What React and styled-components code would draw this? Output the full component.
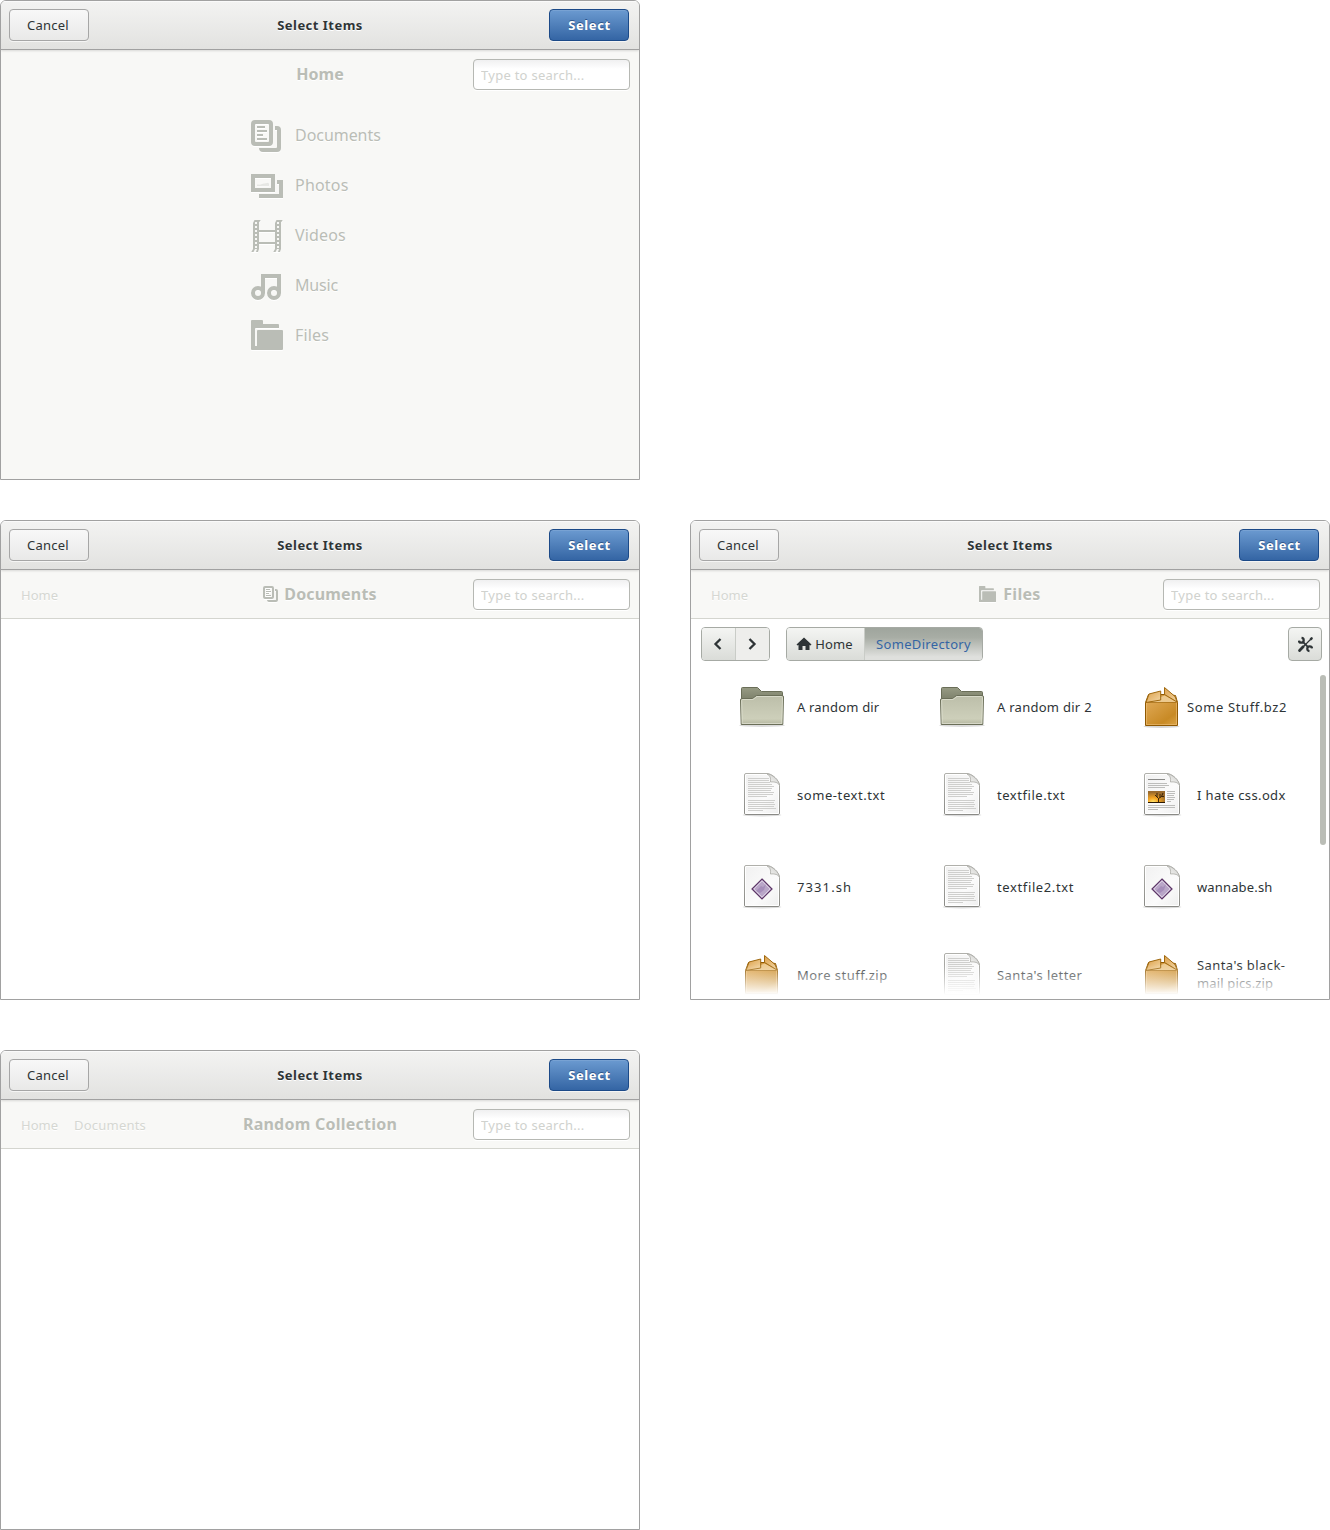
import React from "react";
import styled, { createGlobalStyle, css } from "styled-components";

const Global = createGlobalStyle`
  * { box-sizing: border-box; }
  body { margin: 0; background: #fff; font-family: "Noto Sans", "Open Sans", sans-serif; font-size: 13px; color: #2e3436; }
  button, input { font: inherit; color: inherit; }
`;

const Board = styled.main`
  width: 1330px;
  height: 1530px;
  display: grid;
  grid-template-columns: 640px 640px;
  grid-template-rows: 520px 530px 480px;
  column-gap: 50px;
  align-content: start;
  overflow: hidden;
`;

const Dialog = styled.section`
  grid-column: ${(p) => p.$col};
  grid-row: ${(p) => p.$row};
  height: 480px;
  display: flex;
  flex-direction: column;
  border: 1px solid #a1a1a1;
  border-radius: 6px 6px 0 0;
  background: ${(p) => (p.$tinted ? "#f8f8f6" : "#fff")};
  overflow: hidden;
`;

const Header = styled.header`
  flex: none;
  height: 49px;
  display: grid;
  grid-template-columns: 1fr auto 1fr;
  align-items: center;
  padding: 0 8px;
  border-bottom: 1px solid #a1a1a1;
  background: linear-gradient(#f3f3f2, #e2e2e0);
  box-shadow: inset 0 1px #fafafa, 0 1px 2px rgba(0, 0, 0, 0.12);
  position: relative;
`;

const Heading = styled.h1`
  margin: 0;
  font-size: 13px;
  font-weight: 700;
  line-height: 18px;
  letter-spacing: 0.48px;
  text-shadow: 0 1px #fff;
`;

const PushButton = styled.button`
  width: 80px;
  height: 32px;
  padding: 0 2px 0 0;
  border: 1px solid #a6a6a6;
  border-radius: 4px;
  background: linear-gradient(#f8f8f8, #e9e9e8);
  box-shadow: 0 1px rgba(255, 255, 255, 0.6);
  letter-spacing: 0.25px;
  ${(p) =>
    p.$primary &&
    css`
      justify-self: end;
      margin-right: 2px;
      padding: 0 0 0 1px;
      border-color: #1c4a88;
      background: linear-gradient(#6b9ad0, #3465a4);
      box-shadow: inset 0 1px #78a2d3, 0 1px rgba(255, 255, 255, 0.6);
      color: #fff;
      font-weight: 700;
      letter-spacing: 0.6px;
      text-shadow: 0 -1px rgba(20, 50, 100, 0.6);
    `}
`;

const SubBar = styled.div`
  flex: none;
  height: 49px;
  display: grid;
  grid-template-columns: minmax(0, 1fr) auto minmax(0, 1fr);
  align-items: center;
  padding: 0 9px;
  background: #f8f8f6;
  border-bottom: 1px solid ${(p) => (p.$plain ? "transparent" : "#d4d5cf")};
`;

const Crumbs = styled.nav`
  display: flex;
  gap: 16px;
  padding: 2px 0 0 11px;
  color: #d5d7d2;
  text-shadow: 0 1px #fff;
`;

const Crumb = styled.span`
  letter-spacing: ${(p) => p.$track || 0}px;
`;

const Place = styled.h2`
  margin: 0;
  display: flex;
  align-items: center;
  gap: ${(p) => p.$gap || 0}px;
  color: #babdb6;
  font-size: 16px;
  line-height: 22px;
  font-weight: 700;
  text-shadow: 0 1px #fff;
  letter-spacing: ${(p) => p.$track || 0}px;
  svg { filter: drop-shadow(0 1px #fff); }
`;

const Search = styled.input`
  justify-self: end;
  width: 157px;
  height: 31px;
  margin-top: 1px;
  padding: 1px 7px;
  border: 1px solid #b6b8b3;
  border-radius: 4px;
  background: linear-gradient(#f0f0f1, #fff 9px);
  box-shadow: 0 1px #fff;
  outline: none;
  &::placeholder { color: #d0d2ce; opacity: 1; letter-spacing: 0.27px; }
`;

const PlaceList = styled.ul`
  list-style: none;
  margin: 0;
  padding: 12px 0 0 250px;
`;

const PlaceItem = styled.li`
  height: 50px;
  display: flex;
  align-items: center;
  gap: 12px;
  color: #babdb6;
  font-size: 16px;
  line-height: 22px;
  text-shadow: 0 1px #fff;
  letter-spacing: ${(p) => p.$track || 0}px;
  svg { filter: drop-shadow(0 1px #fff); }
`;

const PlaceName = styled.span`
  padding-bottom: 2px;
`;

const Browser = styled.div`
  flex: 1;
  min-height: 0;
  position: relative;
  display: flex;
  flex-direction: column;
`;

const Toolbar = styled.div`
  flex: none;
  height: 44px;
  display: flex;
  align-items: flex-start;
  padding: 8px 7px 0 10px;
`;

const ButtonGroup = styled.div`
  display: flex;
  height: 34px;
  margin-right: 16px;
  border: 1px solid #a6aaa4;
  border-radius: 4px;
  overflow: hidden;
`;

const Segment = styled.button`
  width: ${(p) => p.$w}px;
  display: flex;
  align-items: center;
  justify-content: center;
  gap: 3px;
  padding: 0 2px 0 0;
  border: 0;
  letter-spacing: ${(p) => p.$track || 0}px;
  background: ${(p) => (p.$flat ? "#eeeeec" : "linear-gradient(#f4f5f3, #dadcd8)")};
  ${(p) => p.$divided && css`border-right: 1px solid #c9ccc7;`}
  ${(p) =>
    p.$active &&
    css`
      padding: 0;
      color: #3465a4;
      background: linear-gradient(#9fa59d, #a8ada5 30%, #dfe0dd 90%);
    `}
`;

const ToolButton = styled.button`
  width: 34px;
  height: 34px;
  margin-left: auto;
  padding: 0;
  display: flex;
  align-items: center;
  justify-content: center;
  border: 1px solid #a6aaa4;
  border-radius: 4px;
  background: linear-gradient(#f4f5f3, #dadcd8);
`;

const FileGrid = styled.div`
  flex: 1;
  min-height: 0;
  overflow: hidden;
  display: grid;
  grid-template-columns: repeat(3, 200px);
  grid-template-rows: 88px 88px 96px 80px;
  padding-left: 47px;
`;

const FileItem = styled.div`
  display: flex;
  align-items: center;
  gap: ${(p) => p.$gap ?? 11}px;
`;

const FileName = styled.div`
  line-height: 18px;
  padding-bottom: ${(p) => (p.$multi ? 3 : 0)}px;
`;

const FileLine = styled.div`
  white-space: nowrap;
  letter-spacing: ${(p) => p.$track || 0}px;
`;

const Fade = styled.div`
  position: absolute;
  left: 0;
  right: 10px;
  bottom: 0;
  height: 35px;
  background: linear-gradient(rgba(255, 255, 255, 0), #fff 31px);
`;

const ScrollThumb = styled.div`
  position: absolute;
  top: 56px;
  right: 3px;
  width: 6px;
  height: 170px;
  border-radius: 3px;
  background: #babdb6;
`;

const DocumentsIcon = ({ size = 32 }) => (
  <svg width={size} height={size} viewBox="0 0 32 32" fill="#babdb6">
    <path fillRule="evenodd" d="M4 0h14a4 4 0 0 1 4 4v18a4 4 0 0 1-4 4H4a4 4 0 0 1-4-4V4a4 4 0 0 1 4-4zM5 4a1 1 0 0 0-1 1v16a1 1 0 0 0 1 1h12a1 1 0 0 0 1-1V5a1 1 0 0 0-1-1z" />
    <path d="M6 6h8v2H6zM6 10h10v2H6zM6 14h6v2H6zM6 18h10v2H6z" />
    <path d="M24 6h2a4 4 0 0 1 4 4v18a4 4 0 0 1-4 4H12a4 4 0 0 1-4-4h17a1 1 0 0 0 1-1V10h-2z" />
  </svg>
);

const PhotosIcon = () => (
  <svg width="32" height="32" viewBox="0 0 32 32" fill="#babdb6">
    <path fillRule="evenodd" d="M0 4h24v18H0zM4 8v10h16V8z" />
    <path d="M26 10h6v18H8v-4h20V14h-2z" />
    <path opacity=".3" d="M6 16v-1.500l3 .3 3-1 3-.6 2-.4 1 1V16z" />
  </svg>
);

const strip = (x) => (
  <g key={x}>
    <path d={`M${x + 2.5} 0H${x + 8.7}L${x + 7} 2.500V29L${x + 6} 32H${x - 0.7}L${x + 1} 29V3z`} />
    {[2, 6, 10, 14, 18, 22, 26].map((y) => (
      <rect key={y} x={x + 3} y={y} width="2" height="2" fill="#f8f8f6" />
    ))}
    <path d={`M${x + 1.5} 32l1.500-3h2l-1 3z`} fill="#f8f8f6" />
  </g>
);

const VideosIcon = () => (
  <svg width="32" height="32" viewBox="0 0 32 32" fill="#babdb6">
    <path d="M7 10h18v2H7zM7 22h18v2H7z" />
    {strip(1)}
    {strip(23)}
  </svg>
);

const MusicIcon = () => (
  <svg width="32" height="32" viewBox="0 0 32 32" fill="#babdb6">
    <path d="M10 4h20v19h-4V8H14v15h-4z" />
    <g fill="none" stroke="#babdb6" strokeWidth="4">
      <circle cx="7" cy="23" r="5" />
      <circle cx="23" cy="23" r="5" />
    </g>
  </svg>
);

const FilesIcon = ({ size = 32 }) => (
  <svg width={size} height={size} viewBox="0 0 32 32" fill="#babdb6">
    <path d="M1 0h10a1 1 0 0 1 1 1v3h15a1 1 0 0 1 1 1v3H5a1 1 0 0 0-1 1v17h2v4H1a1 1 0 0 1-1-1V1a1 1 0 0 1 1-1z" />
    <path d="M7 10h24a1 1 0 0 1 1 1v18a1 1 0 0 1-1 1H4v-3h2V11a1 1 0 0 1 1-1z" />
  </svg>
);

const Chevron = ({ d }) => (
  <svg width="16" height="16" viewBox="0 0 16 16" fill="none" stroke="#2e3436" strokeWidth="2.3">
    <path d={d} />
  </svg>
);

const HouseIcon = () => (
  <svg width="16" height="16" viewBox="0 0 16 16" fill="#2e3436">
    <path d="M8 1.500 15.500 8.500 14.500 9.500 13.500 9V14H9.500V10H6.500V14H2.500V9L1.500 9.500.5 8.500z" />
  </svg>
);

const ToolsIcon = () => (
  <svg width="17" height="17" viewBox="0 0 18 18" fill="none" stroke="#2e3436">
    <path strokeWidth="1.300" d="M7 11 14 4" />
    <path strokeWidth="3" strokeLinecap="round" d="M2.700 15.300 6.500 11.500" />
    <path strokeWidth="2.600" strokeLinecap="round" d="M14.700 3.300 15.500 2.500" />
    <path strokeWidth="2" d="M6 6 12 12" />
    <path strokeWidth="2.400" d="M4.800 2.100A2.500 2.500 0 1 1 2.100 4.800M13.200 15.900A2.500 2.500 0 1 1 15.900 13.200" />
  </svg>
);

const FolderIcon = () => (
  <svg width="48" height="48" viewBox="0 0 48 48">
    <defs>
      <linearGradient id="folderFront" x1="0" y1="0" x2="0" y2="1">
        <stop offset="0" stopColor="#bcbea9" />
        <stop offset=".8" stopColor="#cdcfba" />
        <stop offset="1" stopColor="#b4b69f" />
      </linearGradient>
      <linearGradient id="folderBack" x1="0" y1="0" x2="0" y2="1">
        <stop offset="0" stopColor="#979b84" />
        <stop offset=".35" stopColor="#7d816b" />
      </linearGradient>
    </defs>
    <ellipse cx="24" cy="42.500" rx="23" ry="1.500" fill="#000" opacity=".14" />
    <path d="M3.500 38V5.500a1 1 0 0 1 1-1H19.500L23.500 8.500H43.500a1 1 0 0 1 1 1V38z" fill="url(#folderBack)" stroke="#6a6e58" />
    <path d="M2.500 17a1.500 1.500 0 0 1 1.500-1.500H14.500L18.500 12.500H44a1.500 1.500 0 0 1 1.500 1.500L44.800 41.500H3.200z" fill="url(#folderFront)" stroke="#6a6e58" />
    <path d="M3.700 17.500a1 1 0 0 1 1-1H15L19 13.500H43.500a1 1 0 0 1 1 1L43.800 40.500H4.200z" fill="none" stroke="#e3e4d6" strokeOpacity=".7" />
  </svg>
);

const Sheet = ({ children }) => (
  <svg width="48" height="48" viewBox="0 0 48 48">
    <defs>
      <linearGradient id="sheetFill" x1="0" y1="0" x2="1" y2="1">
        <stop offset="0" stopColor="#f1f1f1" />
        <stop offset=".6" stopColor="#fbfbfb" />
        <stop offset="1" stopColor="#eeeeee" />
      </linearGradient>
      <linearGradient id="sheetEdge" x1="0" y1="0" x2="0" y2="1">
        <stop offset="0" stopColor="#b0b0ab" />
        <stop offset="1" stopColor="#8a8a86" />
      </linearGradient>
      <linearGradient id="sheetFold" x1="0" y1="1" x2="1" y2="0">
        <stop offset="0" stopColor="#ffffff" />
        <stop offset="1" stopColor="#c9c9c5" />
      </linearGradient>
    </defs>
    <ellipse cx="24" cy="44" rx="19.500" ry="1.500" fill="#000" opacity=".14" />
    <path d="M8 2.500H29c5 0 12.500 7 12.500 12V42a1.500 1.500 0 0 1-1.500 1.500H8A1.500 1.500 0 0 1 6.500 42V4A1.500 1.500 0 0 1 8 2.500z" fill="url(#sheetFill)" stroke="url(#sheetEdge)" />
    <path d="M8 3.500H29c5 0 11.500 6 11.500 11V42.500H7.500V4z" fill="none" stroke="#fff" />
    {children}
    <path d="M29 3c3 1 4 4 3.500 8 4-.5 8 .5 9 3.500C41 9 34 3 29 3z" fill="url(#sheetFold)" stroke="#a9a9a5" strokeWidth=".8" />
  </svg>
);

const textLines = [
  [7, 21], [9, 21], [11, 22], [13, 24], [15, 26], [17, 24], [19, 23], [21, 26], [23, 25], [25, 19],
  [29, 27], [31, 26], [33, 27], [35, 26], [37, 28], [39, 15],
];

const TextIcon = () => (
  <Sheet>
    {textLines.map(([y, w]) => (
      <rect key={y} x="10" y={y} width={w} height="1" fill="#cfcfcd" />
    ))}
  </Sheet>
);

const ScriptIcon = () => (
  <Sheet>
    <path d="M24 16 34 26 24 36 14 26z" fill="#b9a6c8" stroke="#5c3566" strokeWidth="1.200" />
    <path d="M24 17.800 32.200 26 24 34.200 15.800 26z" fill="none" stroke="#e6dcec" strokeWidth=".9" />
    <path d="M18 28 23 23 25 24 28 21 26 27 22 30z" fill="#9a7fb0" opacity=".6" />
  </Sheet>
);

const OfficeIcon = () => (
  <Sheet>
    <rect x="10" y="8" width="17" height="1" fill="#8a8a88" />
    {[[10, 12, 19], [10, 14, 21], [10, 16, 17], [29, 20, 8], [29, 22, 8], [29, 24, 7], [29, 26, 8], [29, 28, 7], [29, 30, 4], [10, 34, 27], [10, 36, 27], [10, 38, 10]].map(([x, y, w]) => (
      <rect key={`${x}-${y}`} x={x} y={y} width={w} height="1" fill="#bdbdbb" />
    ))}
    <defs>
      <radialGradient id="sunset" cx=".3" cy=".9" r=".8">
        <stop offset="0" stopColor="#ffe36a" />
        <stop offset=".4" stopColor="#f5a623" />
        <stop offset="1" stopColor="#9a6a2c" />
      </radialGradient>
    </defs>
    <rect x="10" y="20" width="17" height="12" fill="url(#sunset)" />
    <rect x="10" y="31" width="17" height="1" fill="#2b1a06" />
    <path d="M20.500 31V27.500L17 24M20.500 27.500 23.500 25.500 25 22M19 26V22M22 26.500V23M23.500 25.500H26" fill="none" stroke="#2b1a06" strokeWidth=".9" />
  </Sheet>
);

const PackageIcon = () => (
  <svg width="48" height="48" viewBox="0 0 48 48">
    <defs>
      <linearGradient id="boxFront" x1="0" y1="0" x2="1" y2="1">
        <stop offset="0" stopColor="#dfa855" />
        <stop offset=".7" stopColor="#c88a25" />
        <stop offset="1" stopColor="#dba548" />
      </linearGradient>
      <linearGradient id="boxFlap" x1="0" y1="0" x2="1" y2="1">
        <stop offset="0" stopColor="#dca04a" />
        <stop offset="1" stopColor="#f3d7a6" />
      </linearGradient>
    </defs>
    <ellipse cx="23.500" cy="43.500" rx="18" ry="1.500" fill="#000" opacity=".16" />
    <path d="M7.500 19.500 10.500 11.500 22.500 11.500H27L37.500 12.500 39.500 19.500z" fill="#d39b45" stroke="#8f5902" />
    <path d="M13 19 22.500 14 27 12.500 38 19z" fill="#ecc98e" />
    <path d="M7.500 19.500H39.500V42.500H7.500z" fill="url(#boxFront)" />
    <path d="M7.500 19.500V42.500H39.500V19.500" fill="none" stroke="#8f5902" />
    <path d="M8.500 19.500V41.500H38.500V19.500" fill="none" stroke="#eec07a" strokeOpacity=".6" />
    <path d="M11 11 22.700 8V17L8 19.500z" fill="url(#boxFlap)" stroke="#a0690f" />
    <path d="M26.500 4.500 37 13.500 39.200 19 26.500 11.500z" fill="url(#boxFlap)" stroke="#a0690f" />
  </svg>
);

const places = [
  { name: "Documents", Icon: DocumentsIcon, track: -0.05 },
  { name: "Photos", Icon: PhotosIcon, track: 0.2 },
  { name: "Videos", Icon: VideosIcon, track: 0.15 },
  { name: "Music", Icon: MusicIcon, track: -0.2 },
  { name: "Files", Icon: FilesIcon, track: 0.15 },
];

const files = [
  { lines: [["A random dir", 0.18]], Icon: FolderIcon },
  { lines: [["A random dir 2", 0.27]], Icon: FolderIcon },
  { lines: [["Some Stuff.bz2", 0.63]], Icon: PackageIcon, gap: 1 },
  { lines: [["some-text.txt", 0.57]], Icon: TextIcon },
  { lines: [["textfile.txt", 0.55]], Icon: TextIcon },
  { lines: [["I hate css.odx", 0.38]], Icon: OfficeIcon },
  { lines: [["7331.sh", 1.1]], Icon: ScriptIcon },
  { lines: [["textfile2.txt", 0.62]], Icon: TextIcon },
  { lines: [["wannabe.sh", 0.15]], Icon: ScriptIcon },
  { lines: [["More stuff.zip", 0.47]], Icon: PackageIcon },
  { lines: [["Santa's letter", 0.44]], Icon: TextIcon },
  { lines: [["Santa's black-", 0.42], ["mail pics.zip", 0.15]], Icon: PackageIcon },
];

const Chooser = ({ col = 1, row, tinted, crumbs = [], place, children }) => (
  <Dialog $col={col} $row={row} $tinted={tinted}>
    <Header>
      <PushButton>Cancel</PushButton>
      <Heading>Select Items</Heading>
      <PushButton $primary>Select</PushButton>
    </Header>
    <SubBar $plain={tinted}>
      <Crumbs>
        {crumbs.map(([name, track]) => (
          <Crumb key={name} $track={track}>{name}</Crumb>
        ))}
      </Crumbs>
      {place}
      <Search placeholder="Type to search..." />
    </SubBar>
    {children}
  </Dialog>
);

export default function App() {
  return (
    <>
      <Global />
      <Board>
        <Chooser row={1} tinted place={<Place>Home</Place>}>
          <PlaceList>
            {places.map(({ name, Icon, track }) => (
              <PlaceItem key={name} $track={track}>
                <Icon />
                <PlaceName>{name}</PlaceName>
              </PlaceItem>
            ))}
          </PlaceList>
        </Chooser>
        <Chooser row={2} crumbs={[["Home", 0]]} place={<Place $gap={5} $track={0.17}><DocumentsIcon size={16} />Documents</Place>} />
        <Chooser col={2} row={2} crumbs={[["Home", 0]]} place={<Place $gap={7} $track={0.3}><FilesIcon size={17} />Files</Place>}>
          <Browser>
            <Toolbar>
              <ButtonGroup>
                <Segment $w={34} $divided><Chevron d="M10.500 3 5.500 8l5 5" /></Segment>
                <Segment $w={33} $flat><Chevron d="M5.500 3l5 5-5 5" /></Segment>
              </ButtonGroup>
              <ButtonGroup>
                <Segment $w={78} $divided $track={0.15}><HouseIcon />Home</Segment>
                <Segment $w={117} $active $track={0.35}>SomeDirectory</Segment>
              </ButtonGroup>
              <ToolButton><ToolsIcon /></ToolButton>
            </Toolbar>
            <FileGrid>
              {files.map(({ lines, Icon, gap }) => (
                <FileItem key={lines[0][0]} $gap={gap}>
                  <Icon />
                  <FileName $multi={lines.length > 1}>
                    {lines.map(([text, track]) => (
                      <FileLine key={text} $track={track}>{text}</FileLine>
                    ))}
                  </FileName>
                </FileItem>
              ))}
            </FileGrid>
            <Fade />
            <ScrollThumb />
          </Browser>
        </Chooser>
        <Chooser row={3} crumbs={[["Home", 0], ["Documents", 0.22]]} place={<Place $track={0.24}>Random Collection</Place>} />
      </Board>
    </>
  );
}
